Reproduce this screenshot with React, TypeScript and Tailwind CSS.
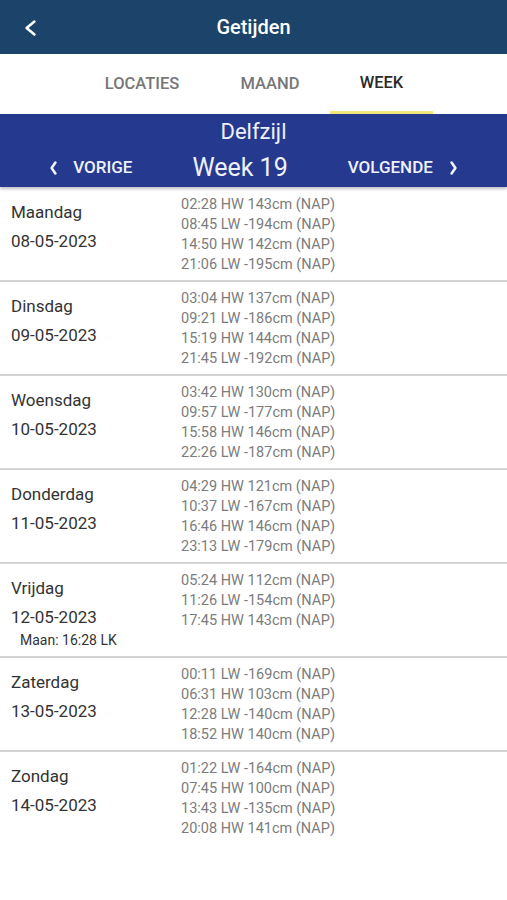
import React from "react";

type Day = { name: string; date: string; tides: string[]; moon?: string };

const days: Day[] = [
  { name: "Maandag", date: "08-05-2023", tides: ["02:28 HW 143cm (NAP)", "08:45 LW -194cm (NAP)", "14:50 HW 142cm (NAP)", "21:06 LW -195cm (NAP)"] },
  { name: "Dinsdag", date: "09-05-2023", tides: ["03:04 HW 137cm (NAP)", "09:21 LW -186cm (NAP)", "15:19 HW 144cm (NAP)", "21:45 LW -192cm (NAP)"] },
  { name: "Woensdag", date: "10-05-2023", tides: ["03:42 HW 130cm (NAP)", "09:57 LW -177cm (NAP)", "15:58 HW 146cm (NAP)", "22:26 LW -187cm (NAP)"] },
  { name: "Donderdag", date: "11-05-2023", tides: ["04:29 HW 121cm (NAP)", "10:37 LW -167cm (NAP)", "16:46 HW 146cm (NAP)", "23:13 LW -179cm (NAP)"] },
  { name: "Vrijdag", date: "12-05-2023", tides: ["05:24 HW 112cm (NAP)", "11:26 LW -154cm (NAP)", "17:45 HW 143cm (NAP)"], moon: "Maan: 16:28 LK" },
  { name: "Zaterdag", date: "13-05-2023", tides: ["00:11 LW -169cm (NAP)", "06:31 HW 103cm (NAP)", "12:28 LW -140cm (NAP)", "18:52 HW 140cm (NAP)"] },
  { name: "Zondag", date: "14-05-2023", tides: ["01:22 LW -164cm (NAP)", "07:45 HW 100cm (NAP)", "13:43 LW -135cm (NAP)", "20:08 HW 141cm (NAP)"] },
];

function Chevron({ dir, w, h, sw }: { dir: "l" | "r"; w: number; h: number; sw: number }) {
  const pts = dir === "l" ? `${w - sw},${sw} ${sw},${h / 2} ${w - sw},${h - sw}` : `${sw},${sw} ${w - sw},${h / 2} ${sw},${h - sw}`;
  return (
    <svg width={w} height={h} viewBox={`0 0 ${w} ${h}`} fill="none">
      <polyline points={pts} stroke="currentColor" strokeWidth={sw} strokeLinecap="round" strokeLinejoin="round" />
    </svg>
  );
}

export default function App() {
  return (
    <div className="w-[507px] h-[900px] bg-white font-['Roboto',sans-serif] overflow-hidden">
      {/* Header */}
      <div className="h-[54px] bg-[#1c4369] grid grid-cols-[60px_1fr_60px] items-center text-white">
        <div className="pl-[24px] pt-[1px] flex items-center">
          <Chevron dir="l" w={13} h={18} sw={2.6} />
        </div>
        <div className="text-center text-[20px] font-medium">Getijden</div>
        <div />
      </div>

      {/* Tabs */}
      <div className="h-[60px] flex justify-center">
        <div className="w-[136px] flex items-center justify-center pt-[1px] text-[16.5px] font-medium text-[#777777]">LOCATIES</div>
        <div className="w-[120px] flex items-center justify-center pt-[1px] text-[16.5px] font-medium text-[#777777]">MAAND</div>
        <div className="w-[103px] flex flex-col">
          <div className="flex-1 flex items-center justify-center pt-[1px] text-[16.5px] font-medium text-[#2b2b2b]">WEEK</div>
          <div className="h-[3px] bg-[#f1e97c]" />
        </div>
      </div>

      {/* Blue band */}
      <div className="h-[73px] bg-[#253a8e] text-[#eef0fa] shadow-[0_2px_3px_rgba(0,0,0,0.25)] relative z-10 flex flex-col items-center">
        <div className="text-[22px] leading-[30px] pt-[3px]">Delfzijl</div>
        <div className="mt-[4px] flex items-center justify-center gap-[60px]">
          <div className="flex items-center gap-[15px]">
            <Chevron dir="l" w={9} h={16} sw={2.6} />
            <span className="text-[17px] font-medium">VORIGE</span>
          </div>
          <div className="text-[25px] leading-[34px]">Week 19</div>
          <div className="flex items-center gap-[16px]">
            <span className="text-[17px] font-medium">VOLGENDE</span>
            <Chevron dir="r" w={9} h={16} sw={2.6} />
          </div>
        </div>
      </div>

      {/* Rows */}
      <div className="mt-[1px]">
        {days.map((d, i) => (
          <div
            key={d.date}
            className={i < days.length - 1 ? "h-[94px] border-b-2 border-[#d4d4d4] flex" : "h-[94px] flex"}
          >
            <div className="w-[181px] pl-[11px] pt-[12px] text-[#333333]">
              <div className="text-[17px] leading-[24px]">{d.name}</div>
              <div className="text-[17px] leading-[24px] mt-[5px]">{d.date}</div>
              {d.moon && <div className="text-[14px] leading-[20px] pl-[9px] mt-[1px]">{d.moon}</div>}
            </div>
            <div className="pt-[7px] text-[14.5px] leading-[20px] text-[#7c7c7c]">
              {d.tides.map((t) => (
                <div key={t}>{t}</div>
              ))}
            </div>
          </div>
        ))}
      </div>
    </div>
  );
}
